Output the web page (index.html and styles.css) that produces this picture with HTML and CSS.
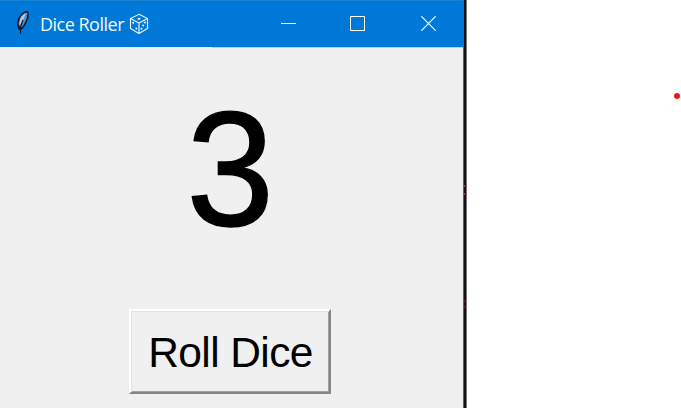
FILE: index.html
```html
<!DOCTYPE html>
<html lang="en">
<head>
<meta charset="utf-8">
<title>Dice Roller</title>
<link rel="stylesheet" href="styles.css">
</head>
<body>
<div class="desktop">
  <main class="window">
    <header class="titlebar">
      <svg class="feather" viewBox="0 0 16 26">
        <path d="M12 1 L14.500 1.500 L14.500 8 L11.500 15 L8 19.500 L4.500 20 L3 15 L4 8 L8 3Z" fill="#101a2b"/>
        <path d="M12 2.500 L13.500 3 L12.500 9 L9 16 L6.500 18 L4.500 14 L6 8 L9 4Z" fill="#5f8ac9"/>
        <path d="M12 3 L7.500 6.500 L5.300 13 L6 15 L10 8Z" fill="#b8c9e2"/>
        <path d="M9 10 L6.500 17 L6.500 24" fill="none" stroke="#101722" stroke-width="1.200"/>
      </svg>
      <h1 class="title">Dice Roller</h1>
      <svg class="die" viewBox="0 0 20 22">
        <path d="M10 1.300 L18.500 5.500 V15.500 L10 20.500 L1.500 15.500 V5.500Z M1.500 5.500 L10 10 L18.500 5.500 M10 10 V20.500" fill="none" stroke="#e6f2fc" stroke-width="1.200"/>
        <g fill="#fff"><ellipse cx="10" cy="5.800" rx="1.500" ry="1"/><circle cx="4.200" cy="9.800" r="1"/><circle cx="7.400" cy="15.400" r="1"/><circle cx="15.800" cy="9.600" r="1"/><circle cx="14.200" cy="12.600" r="1"/><circle cx="12.500" cy="15.700" r="1"/></g>
      </svg>
      <div class="controls">
        <svg class="control minimize" viewBox="0 0 15 15"><path d="M0 7.500H15"/></svg>
        <svg class="control maximize" viewBox="0 0 15 15"><path d="M.5.5h14v14H.5z"/></svg>
        <svg class="control close" viewBox="0 0 15 15"><path d="M.3.3l14.400 14.400M14.700.3L.3 14.700"/></svg>
      </div>
    </header>
    <section class="content">
      <div class="result">3</div>
      <button class="roll">Roll Dice</button>
    </section>
  </main>
  <div class="edge"><i class="speck s1"></i><i class="speck s2"></i><i class="speck s3"></i><i class="speck s4"></i></div>
  <i class="dot"></i>
</div>
</body>
</html>
```
FILE: styles.css
```css
* { box-sizing: border-box; }
body { margin: 0; background: #fff; font-family: "Liberation Sans", Arial, sans-serif; }
.desktop { position: relative; display: flex; height: 408px; overflow: hidden; }
.window { width: 464px; flex: none; background: #f0f0f0; border-right: 1px solid #0878d4; }
.titlebar { height: 47px; display: flex; align-items: center; padding: 0 27px 2px 14px; background: #0078d7; border-top: 1px solid #1a82d5; }
.feather { width: 16px; height: 26px; }
.title { margin: 2px 0 0 10px; width: 84px; white-space: nowrap; font: 400 18px/24px "Open Sans", "Noto Sans", sans-serif; letter-spacing: -0.5px; color: #f4faff; }
.die { width: 20px; height: 22px; margin-left: 5px; margin-top: 1px; }
.controls { margin-left: auto; display: flex; }
.control { width: 15px; height: 15px; fill: none; stroke: #fff; stroke-width: 1; }
.maximize { margin-left: 54px; }
.close { margin-left: 56px; stroke-width: 1.2; }
.content { height: 361px; display: flex; flex-direction: column; align-items: center; padding-right: 3px; background: linear-gradient(#c8cdd1, #c8cdd1) 212px 0 / 252px 1px no-repeat; }
.result { height: 200px; margin-top: 22px; font-size: 163px; line-height: 199px; color: #000; -webkit-text-stroke: 1.4px #000; transform: scaleX(.97); }
.roll { width: 202px; height: 85px; margin-top: 40px; padding: 2px 0 0 1px; border: 2px solid; border-color: #fff #858585 #858585 #fff; background: #f0f0f0; box-shadow: inset 1px 1px #e3e3e3, inset -1px -1px #a0a0a0; font: 42.5px/79px "Liberation Sans", Arial, sans-serif; letter-spacing: -0.6px; color: #000; white-space: nowrap; }
.edge { position: relative; width: 3px; background: linear-gradient(to right, #101318 2px, #777 2px); }
.speck { position: absolute; left: 0; width: 1px; height: 2px; background: #b53a16; }
.s1 { top: 185px; }
.s2 { top: 193px; }
.s3 { top: 300px; background: #7d101c; }
.s4 { top: 306px; background: #7d101c; }
.dot { position: absolute; left: 674px; top: 93px; width: 6px; height: 6px; border-radius: 50%; background: #e51b1b; }
```
